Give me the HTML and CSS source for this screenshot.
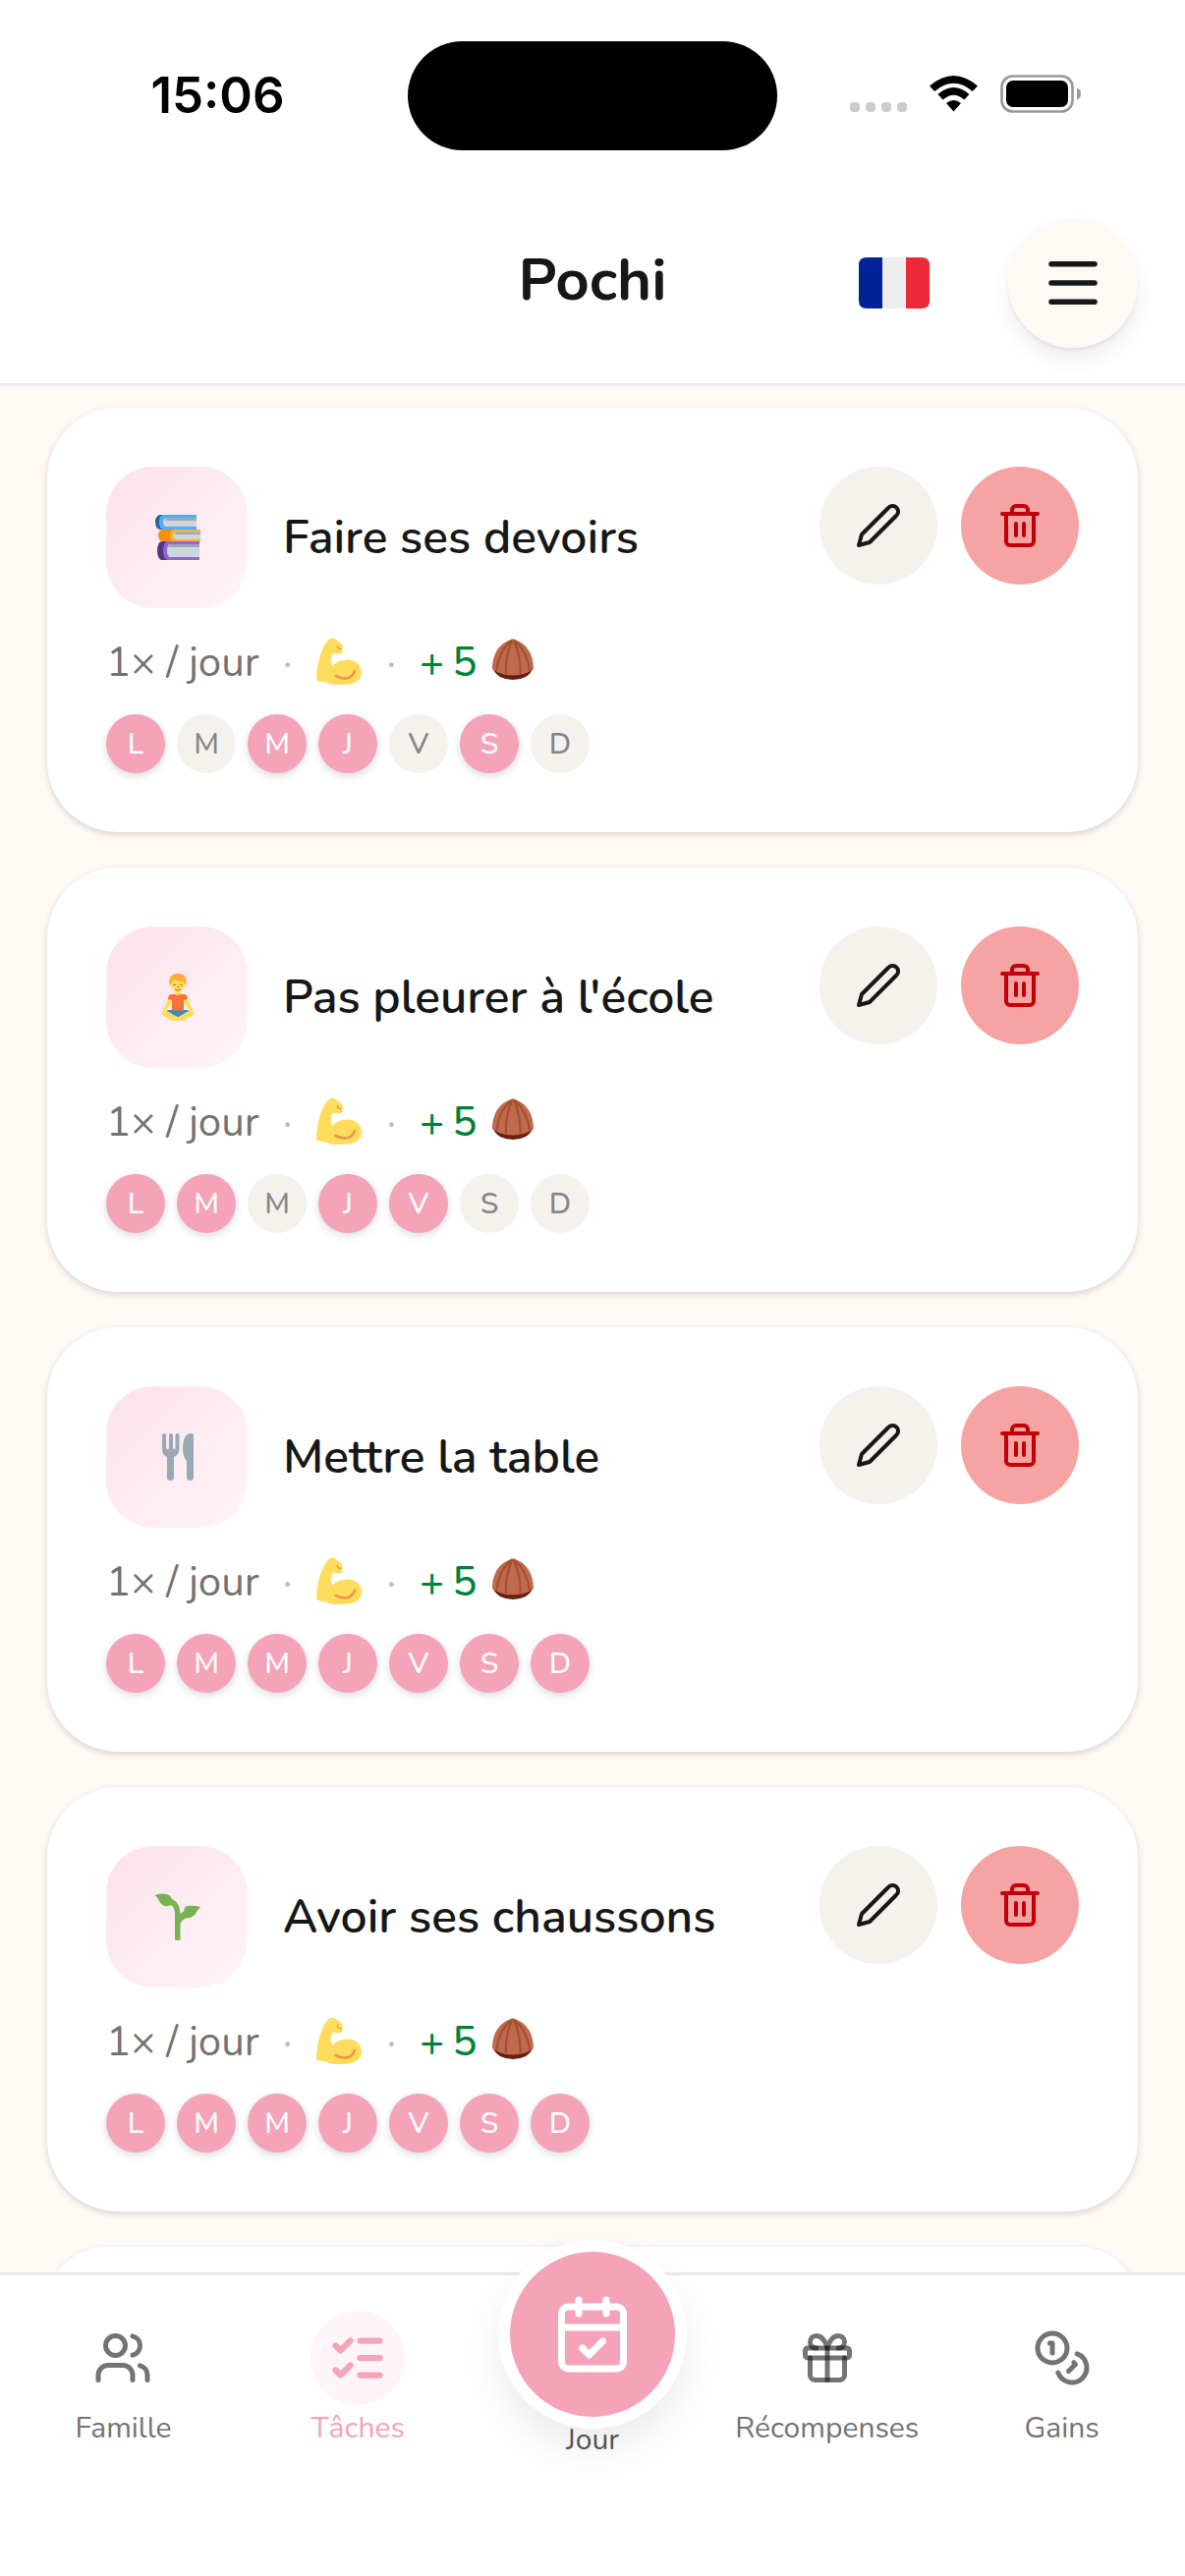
FILE: index.html
```html
<!DOCTYPE html>
<html lang="fr">
<head>
    <meta charset="UTF-8">
    <meta name="viewport" content="width=device-width, initial-scale=1.0">
    <title>Pochi</title>
    <link rel="stylesheet" href="styles.css">
</head>
<body>
    <svg class="sprite" aria-hidden="true">
        <symbol id="pencil" viewBox="0 0 24 24"><path d="M17 3a2.85 2.83 0 1 1 4 4L7.5 20.5 2 22l1.5-5.5Z"/></symbol>
        <symbol id="trash" viewBox="0 0 24 24"><path d="M3 6h18M19 6v14a2 2 0 0 1-2 2H7a2 2 0 0 1-2-2V6M8 6V4a2 2 0 0 1 2-2h4a2 2 0 0 1 2 2v2M10 11v6M14 11v6"/></symbol>
        <symbol id="muscle" viewBox="0 0 48 48">
            <path fill="#ffdc5d" d="M1 43.500C1 27 6 10 13 2.500Q17 -1 20 1.500L26 6Q29 8 27 12Q29 15 26 16Q21 17 18 15.500Q14 20 17 29Q23 22 34 22.500Q46 24 47 35Q47 45 36 47Q19 50 10 45.500Q5 45 1 43.500Z"/>
            <path fill="none" stroke="#ef9645" stroke-width="2.600" stroke-linecap="round" d="M20.500 39Q35 46 40 34"/>
            <path fill="none" stroke="#ef9645" stroke-width="1.500" stroke-linecap="round" d="M22.500 8.500Q22 11.500 26 11.500"/>
        </symbol>
        <symbol id="nut" viewBox="0 0 42 42">
            <path fill="#662113" d="M0 29Q10 37 21 37T42 29Q40 35 34 39Q28 42 21 42T8 39Q2 35 0 29Z"/>
            <path fill="#c1694f" d="M0 31C0 16 7 5 18 1.500Q21 -1 24 1.500C35 5 42 16 42 31Q33 37.500 21 37.500T0 31Z"/>
            <path fill="none" stroke="#a0522d" stroke-width="2.200" d="M19 2Q6 14 4.500 33M20 2Q13 18 14 36M22 2Q29 18 28.500 36M23 2Q36 14 38 33"/>
        </symbol>
    </svg>

    <div class="status-bar">
        <span class="time">15:06</span>
        <span class="island"></span>
        <svg class="status-icons" viewBox="0 0 238 42" aria-hidden="true">
            <g fill="#ccc">
                <rect x="0" y="28" width="10" height="10" rx="4"/>
                <rect x="16" y="28" width="10" height="10" rx="4"/>
                <rect x="32" y="28" width="10" height="10" rx="4"/>
                <rect x="48" y="28" width="10" height="10" rx="4"/>
            </g>
            <path d="M81 11.500Q105.500 -9.500 130 11.500L124.800 17Q105.500 0.500 86.200 17ZM89.500 20Q105.500 6 121.500 20L116.300 25.500Q105.500 16 94.700 25.500ZM98 29Q105.500 23 113 29L105.500 37.500Z"/>
            <rect x="154.500" y="1.500" width="72" height="36" rx="11" fill="none" stroke="#999" stroke-width="2.600"/>
            <rect x="159" y="6" width="63" height="27" rx="7"/>
            <path fill="#999" d="M231 13.500Q235 15 235 19.500T231 25.500Z"/>
        </svg>
    </div>

    <header class="header">
        <h1>Pochi</h1>
        <div class="header-actions">
            <button class="lang-btn" aria-label="Langue : français">
                <svg width="72" height="52" viewBox="0 0 72 52">
                    <path fill="#002395" d="M8 0H24V52H8Q0 52 0 44V8Q0 0 8 0Z"/>
                    <path fill="#eee" d="M24 0H48V52H24Z"/>
                    <path fill="#ed2939" d="M48 0H64Q72 0 72 8V44Q72 52 64 52H48Z"/>
                </svg>
            </button>
            <button class="menu-btn" aria-label="Menu">
                <svg class="icon" width="66" height="66" viewBox="0 0 24 24"><path d="M4 5h16M4 12h16M4 19h16"/></svg>
            </button>
        </div>
    </header>

    <main class="task-list">
        <article class="task-card">
            <div class="task-top">
                <div class="task-icon">
                    <svg width="48" height="48" viewBox="0 0 48 48">
                        <path fill="#226699" d="M7 1H12V16H7Q2 15 2 8.500T7 1Z"/>
                        <path fill="#55acee" d="M10 1H44V4H12V13H44V16H10Q6 15 6 8.500T10 1Z"/>
                        <path fill="#ccd6dd" d="M13 4H44V13H13Q10 12 10 8.500T13 4Z"/><path fill="#9aaab4" d="M13 4H44V7H12Z"/>
                        <path fill="#f4900c" d="M9 16H22V28H9Q5 27 5 22T9 16Z"/>
                        <path fill="#ffac33" d="M20 16H48V18.500H23V25.500H48V28H20Q17 27 17 22T20 16Z"/>
                        <path fill="#ccd6dd" d="M23 18.500H48V25.500H23Q20 25 20 22T23 18.500Z"/><path fill="#9aaab4" d="M23 18.500H48V21H22Z"/>
                        <path fill="#553788" d="M8 28H14V47H8Q4 45 4 37.500T8 28Z"/>
                        <path fill="#9266cc" d="M14 28H47V31H16V44H47V47H14Q10 45 10 37.500T14 28Z"/>
                        <path fill="#ccd6dd" d="M17 31H47V44H17Q14 43 14 37.500T17 31Z"/><path fill="#9aaab4" d="M17 31H47V34H15Z"/>
                    </svg>
                </div>
                <h2>Faire ses devoirs</h2>
                <div class="task-actions">
                    <button class="edit-btn" aria-label="Modifier"><svg class="icon"><use href="#pencil"/></svg></button>
                    <button class="delete-btn" aria-label="Supprimer"><svg class="icon"><use href="#trash"/></svg></button>
                </div>
            </div>
            <div class="task-meta">
                <span>1× / jour</span>
                <span class="dot">·</span>
                <svg class="muscle"><use href="#muscle"/></svg>
                <span class="dot">·</span>
                <div class="reward"><span>+</span> <span>5</span> <svg><use href="#nut"/></svg></div>
            </div>
            <ul class="days">
                <li class="on">L</li><li>M</li><li class="on">M</li><li class="on">J</li><li>V</li><li class="on">S</li><li>D</li>
            </ul>
        </article>

        <article class="task-card">
            <div class="task-top">
                <div class="task-icon">
                    <svg width="48" height="48" viewBox="0 0 48 48">
                        <path fill="#ffdc5d" d="M17 22L10 37L8 41Q10 43 13 38L19 29V22ZM33 22L40 37L42 41Q40 43 37 38L31 29V22ZM22 15H28V22H22Z"/>
                        <path fill="#3b88c3" d="M15 37H35L38 40L30 45H20L12 40Z"/>
                        <path fill="#ffdc5d" d="M9 40Q13 37 17 39.500L25 44L33 39.500Q37 37 41 40Q42 43 35 45L31 48H19L15 45Q8 43 9 40Z"/>
                        <path fill="#3b88c3" d="M14 37H36L31 41L25 44L19 41Z"/>
                        <path fill="#f4743b" d="M18 21H22Q25 23 28 21H32Q35 22 35 26L31 27V37.500H19V27L15 26Q15 22 18 21Z"/>
                        <circle fill="#ffdc5d" cx="25" cy="10.500" r="7.500"/>
                        <path fill="#ffac33" d="M17 13C15 4 18 0 25 0S35 4 33 13L31 8Q27 9 22 6Q19 7 17 13Z"/>
                        <path fill="none" stroke="#bf6952" stroke-width="1" d="M20 11.500H23M27 11.500H30M24 13.500H26M22 16Q25 18 28 16"/>
                    </svg>
                </div>
                <h2>Pas pleurer à l'école</h2>
                <div class="task-actions">
                    <button class="edit-btn" aria-label="Modifier"><svg class="icon"><use href="#pencil"/></svg></button>
                    <button class="delete-btn" aria-label="Supprimer"><svg class="icon"><use href="#trash"/></svg></button>
                </div>
            </div>
            <div class="task-meta">
                <span>1× / jour</span>
                <span class="dot">·</span>
                <svg class="muscle"><use href="#muscle"/></svg>
                <span class="dot">·</span>
                <div class="reward"><span>+</span> <span>5</span> <svg><use href="#nut"/></svg></div>
            </div>
            <ul class="days">
                <li class="on">L</li><li class="on">M</li><li>M</li><li class="on">J</li><li class="on">V</li><li>S</li><li>D</li>
            </ul>
        </article>

        <article class="task-card">
            <div class="task-top">
                <div class="task-icon">
                    <svg width="48" height="48" viewBox="0 0 48 48">
                        <path fill="#99aab5" d="M9 2Q9 0 11 0T13 2V15Q13 16 14.500 16T16 15V2Q16 0 18 0T20 2V15Q20 16 21.200 16T22.500 15V2Q22.500 0 24.500 0T26.500 2V16Q26 22 21 24V45Q21 48 17.500 48T14 45V24Q9 22 9 16ZM41 2V45Q41 48 37.500 48T34 45V28Q30 24 30 15Q30 0 39 0Q41 0 41 2Z"/>
                    </svg>
                </div>
                <h2>Mettre la table</h2>
                <div class="task-actions">
                    <button class="edit-btn" aria-label="Modifier"><svg class="icon"><use href="#pencil"/></svg></button>
                    <button class="delete-btn" aria-label="Supprimer"><svg class="icon"><use href="#trash"/></svg></button>
                </div>
            </div>
            <div class="task-meta">
                <span>1× / jour</span>
                <span class="dot">·</span>
                <svg class="muscle"><use href="#muscle"/></svg>
                <span class="dot">·</span>
                <div class="reward"><span>+</span> <span>5</span> <svg><use href="#nut"/></svg></div>
            </div>
            <ul class="days">
                <li class="on">L</li><li class="on">M</li><li class="on">M</li><li class="on">J</li><li class="on">V</li><li class="on">S</li><li class="on">D</li>
            </ul>
        </article>

        <article class="task-card">
            <div class="task-top">
                <div class="task-icon">
                    <svg width="48" height="48" viewBox="0 0 48 48">
                        <path fill="#77b255" d="M1.500 2Q12 -1 17 2.500Q18 5 20 6.500Q27 10 27.500 21Q29 20 31.500 18Q31 14 35 13Q41 12 48 14Q45 17 43 21Q39 26 34 25Q29 27 27.500 31V47Q27.500 48 25 48T22 47V22Q22 15 18 12Q15 14 11 13Q7 11 5 6Q4 4 1.500 2Z"/>
                    </svg>
                </div>
                <h2>Avoir ses chaussons</h2>
                <div class="task-actions">
                    <button class="edit-btn" aria-label="Modifier"><svg class="icon"><use href="#pencil"/></svg></button>
                    <button class="delete-btn" aria-label="Supprimer"><svg class="icon"><use href="#trash"/></svg></button>
                </div>
            </div>
            <div class="task-meta">
                <span>1× / jour</span>
                <span class="dot">·</span>
                <svg class="muscle"><use href="#muscle"/></svg>
                <span class="dot">·</span>
                <div class="reward"><span>+</span> <span>5</span> <svg><use href="#nut"/></svg></div>
            </div>
            <ul class="days">
                <li class="on">L</li><li class="on">M</li><li class="on">M</li><li class="on">J</li><li class="on">V</li><li class="on">S</li><li class="on">D</li>
            </ul>
        </article>

        <article class="task-card"></article>
    </main>

    <nav class="tab-bar">
        <a href="#famille" class="tab">
            <span class="tab-icon"><svg class="icon" viewBox="0 0 24 24"><path d="M16 21v-2a4 4 0 0 0-4-4H6a4 4 0 0 0-4 4v2M22 21v-2a4 4 0 0 0-3-3.870M16 3.130a4 4 0 0 1 0 7.750"/><circle cx="9" cy="7" r="4"/></svg></span>
            <span>Famille</span>
        </a>
        <a href="#taches" class="tab active">
            <span class="tab-icon"><svg class="icon" viewBox="0 0 24 24"><path d="M13 5h8M13 12h8M13 19h8M3 17l2 2 4-4M3 7l2 2 4-4"/></svg></span>
            <span>Tâches</span>
        </a>
        <a href="#jour" class="tab tab-main">
            <span class="fab"><svg class="icon" viewBox="0 0 24 24"><path d="M8 2v4M16 2v4M3 10h18M9 16l2 2 4-4"/><rect x="3" y="4" width="18" height="18" rx="2"/></svg></span>
            <span>Jour</span>
        </a>
        <a href="#recompenses" class="tab">
            <span class="tab-icon"><svg class="icon gift" viewBox="0 0 24 24"><rect x="3" y="8" width="18" height="4" rx="1"/><path d="M12 8v13"/><path d="M19 12v7a2 2 0 0 1-2 2H7a2 2 0 0 1-2-2v-7"/><path d="M7.500 8a2.500 2.500 0 0 1 0-5A4.800 8 0 0 1 12 8a4.800 8 0 0 1 4.500-5 2.500 2.500 0 0 1 0 5"/></svg></span>
            <span>Récompenses</span>
        </a>
        <a href="#gains" class="tab">
            <span class="tab-icon"><svg class="icon" viewBox="0 0 24 24"><circle cx="8" cy="8" r="6"/><path d="M18.090 10.370A6 6 0 1 1 10.340 18M7 6h1v4M16.710 13.880l.7.710-2.820 2.820"/></svg></span>
            <span>Gains</span>
        </a>
    </nav>
</body>
</html>
```

FILE: styles.css
```css
* { box-sizing: border-box; margin: 0; padding: 0; }

body {
    display: flex;
    flex-direction: column;
    height: 100vh;
    overflow: hidden;
    background: #fff9f5;
    color: #171717;
    font-family: Nunito, "Open Sans", "Noto Sans", sans-serif;
}

button { border: none; background: none; cursor: pointer; font: inherit; color: inherit; }
a { text-decoration: none; }

.sprite { display: none; }
.icon {
    fill: none;
    stroke: currentColor;
    stroke-width: 2;
    stroke-linecap: round;
    stroke-linejoin: round;
}

/* Status bar */
.status-bar {
    display: grid;
    grid-template-columns: 1fr 376px 1fr;
    align-items: center;
    flex-shrink: 0;
    height: 194px;
    background: #fff;
}
.time {
    justify-self: center;
    padding-left: 28px;
    color: #000;
    font: 600 51px/60px Inter, sans-serif;
}
.island { height: 111px; border-radius: 56px; background: #000; }
.status-icons { width: 238px; height: 42px; margin-left: 74px; }

/* Header */
.header {
    display: grid;
    grid-template-columns: 1fr auto 1fr;
    align-items: center;
    flex-shrink: 0;
    height: 199px;
    padding: 0 48px 8px;
    background: #fff;
    border-bottom: 3px solid #ebebeb;
}
.header h1 {
    grid-column: 2;
    padding-bottom: 6px;
    font-size: 60px;
    line-height: 72px;
    font-weight: 700;
}
.header-actions { display: flex; align-items: center; justify-content: flex-end; gap: 80px; }
.lang-btn svg, .menu-btn svg { display: block; }
.menu-btn {
    display: flex;
    align-items: center;
    justify-content: center;
    width: 132px;
    height: 132px;
    border-radius: 50%;
    background: #fff9f5;
    box-shadow: 0 3px 3px rgba(0, 0, 0, 0.05), 0 12px 20px rgba(0, 0, 0, 0.07);
}

/* Tasks */
.task-list {
    display: flex;
    flex-direction: column;
    flex: 1;
    gap: 36px;
    min-height: 0;
    overflow: hidden;
    padding: 22px 48px 0;
}
.task-card {
    display: flex;
    flex-direction: column;
    flex-shrink: 0;
    gap: 24px;
    padding: 60px;
    border-radius: 72px;
    background: #fff;
    box-shadow: 0 3px 6px rgba(0, 0, 0, 0.12), 0 0 10px rgba(0, 0, 0, 0.03);
}
.task-top { display: flex; align-items: center; gap: 36px; }
.task-icon {
    display: flex;
    align-items: center;
    justify-content: center;
    width: 144px;
    height: 144px;
    border-radius: 48px;
    background: linear-gradient(135deg, #fce2e9, #fff5f9);
}
.task-top h2 { flex: 1; font-size: 48px; line-height: 60px; font-weight: 600; }
.task-actions { display: flex; align-self: flex-start; gap: 24px; }
.task-actions button {
    display: flex;
    align-items: center;
    justify-content: center;
    width: 120px;
    height: 120px;
    border-radius: 50%;
}
.task-actions svg { width: 48px; height: 48px; }
.edit-btn { background: #f5f1ed; }
.task-actions .delete-btn { background: #f5a3a3; color: #c10007; }

.task-meta {
    display: flex;
    align-items: center;
    gap: 24px;
    height: 60px;
    color: #737373;
    font-size: 42px;
    line-height: 60px;
}
.task-meta span { padding-top: 3px; }
.dot { color: #bbb; }
.muscle { width: 48px; height: 48px; }
.reward { display: flex; align-items: center; gap: 8px; color: #008236; font-weight: 500; }
.reward svg { width: 42px; height: 42px; margin: 0 0 4px 8px; }

.days { display: flex; gap: 12px; list-style: none; }
.days li {
    width: 60px;
    height: 60px;
    border-radius: 50%;
    background: #f5f1ed;
    color: #858585;
    font-size: 30px;
    line-height: 62px;
    font-weight: 500;
    text-align: center;
}
.days .on { background: #f5a3b8; color: #fff; box-shadow: 0 3px 8px rgba(0, 0, 0, 0.14); }

/* Bottom tabs */
.tab-bar {
    position: relative;
    display: grid;
    grid-template-columns: repeat(5, 1fr);
    flex-shrink: 0;
    height: 309px;
    padding: 36px 6px 0;
    background: #fff;
    border-top: 3px solid #ebebeb;
}
.tab {
    display: flex;
    flex-direction: column;
    align-items: center;
    color: #737373;
    font-size: 30px;
    line-height: 48px;
}
.tab-icon {
    display: flex;
    align-items: center;
    justify-content: center;
    width: 96px;
    height: 96px;
    border-radius: 50%;
}
.tab-icon svg { width: 60px; height: 60px; }
.gift { stroke: rgba(23, 23, 23, 0.6); }
.active { color: #f5a3b8; }
.active .tab-icon { background: #fff5f9; }
.active .icon { stroke-width: 2.5; }
.tab-main { margin-top: -72px; color: #525252; line-height: 24px; }
.fab {
    display: flex;
    align-items: center;
    justify-content: center;
    width: 192px;
    height: 192px;
    border: 12px solid #fff;
    border-radius: 50%;
    background: #f5a3b8;
    color: #fff;
    box-shadow: 0 20px 40px rgba(0, 0, 0, 0.08);
}
.fab svg { width: 84px; height: 84px; }
```
